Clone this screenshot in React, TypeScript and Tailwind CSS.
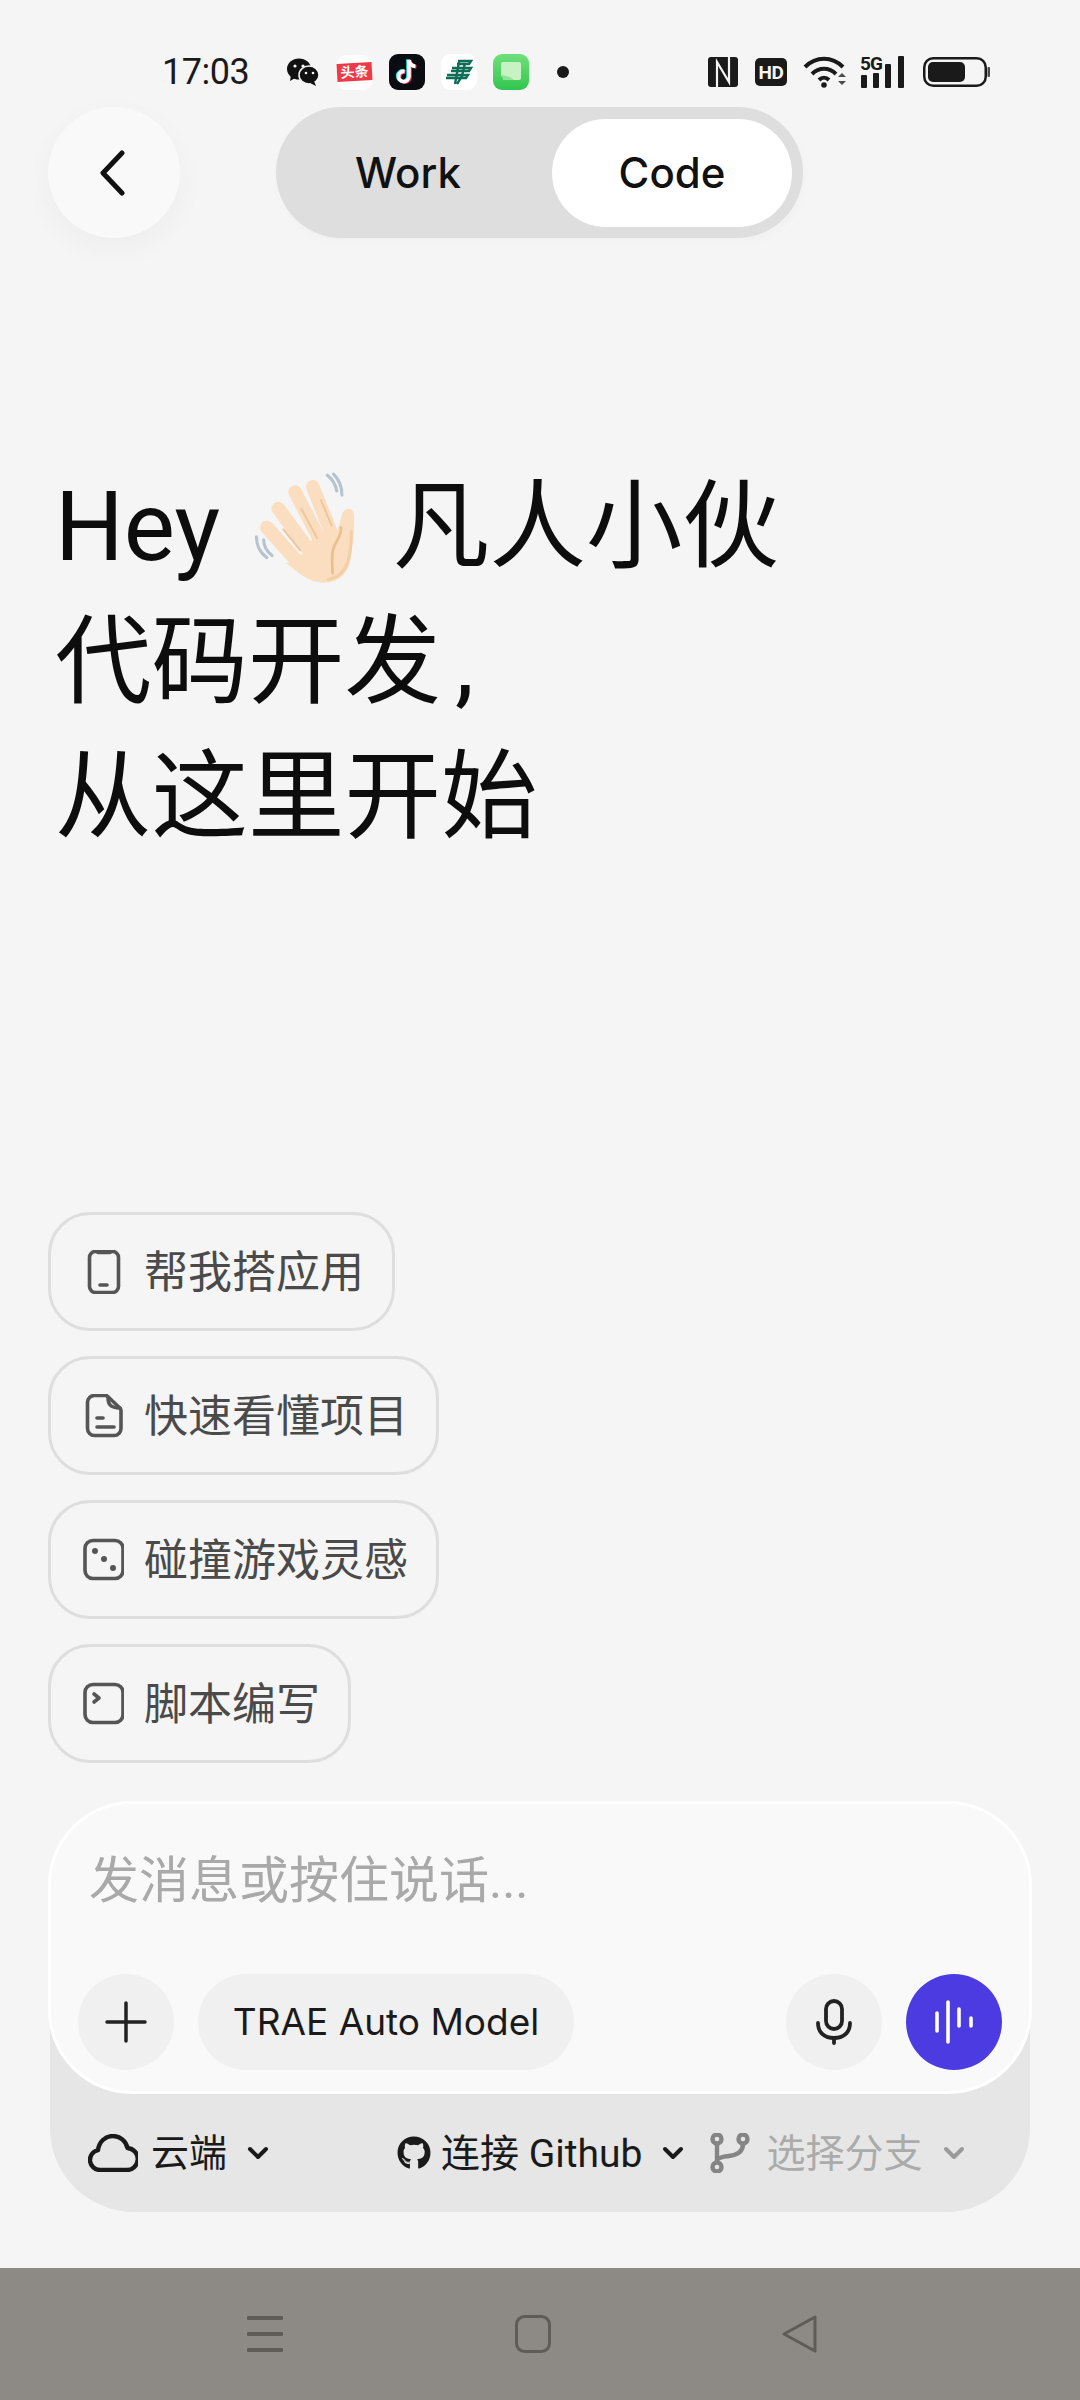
import React from "react";
import { FaGithub } from "react-icons/fa";

function WeChat() {
  return (
    <svg width="32" height="28" viewBox="0 0 32 28" className="shrink-0">
      <ellipse cx="12" cy="11" rx="12" ry="10.5" fill="#111" />
      <path d="M4 17l-1 6 7-4z" fill="#111" />
      <ellipse cx="22" cy="17" rx="10" ry="9" fill="#111" stroke="#f5f5f5" strokeWidth="1.5" />
      <path d="M27 23l2 5-6-3z" fill="#111" />
      <circle cx="8" cy="8" r="1.6" fill="#f5f5f5" />
      <circle cx="16" cy="8" r="1.6" fill="#f5f5f5" />
      <circle cx="19" cy="15" r="1.3" fill="#f5f5f5" />
      <circle cx="26" cy="15" r="1.3" fill="#f5f5f5" />
    </svg>
  );
}

function TikTok() {
  const note = "M20 6v16.5a5.2 5.2 0 1 1-4.4-5.1";
  const tail = "M20 6c.4 3.6 2.8 6 6.4 6.4";
  return (
    <div className="w-[36px] h-[36px] rounded-[9px] bg-[#0b0b12] shrink-0">
      <svg width="36" height="36" viewBox="0 0 36 36" fill="none" strokeWidth="3.6">
        <g stroke="#25e4e0" transform="translate(-1 -0.5)"><path d={note} /><path d={tail} /></g>
        <g stroke="#f5285a" transform="translate(1 0.5)"><path d={note} /><path d={tail} /></g>
        <g stroke="#ffffff"><path d={note} /><path d={tail} /></g>
      </svg>
    </div>
  );
}

function Post() {
  return (
    <div className="w-[36px] h-[36px] rounded-[9px] bg-white shrink-0">
      <svg width="36" height="36" viewBox="0 0 36 36" fill="none" stroke="#0f6d57" strokeWidth="2.4">
        <path d="M17 7h13l-2 3H16M11 14h19l-2 3H10M6 21h21l-2 3H5" />
        <path d="M18 8l-4 22M24 9l-3 13-5 8" />
      </svg>
    </div>
  );
}

function Messages() {
  return (
    <div className="w-[36px] h-[36px] rounded-[9px] bg-gradient-to-b from-[#6fe07a] to-[#2fc54f] shrink-0">
      <svg width="36" height="36" viewBox="0 0 36 36">
        <path d="M10 8h16a2 2 0 0 1 2 2v14a2 2 0 0 1-2 2H15l-5-3a2 2 0 0 1-2-2V10a2 2 0 0 1 2-2z" fill="#c6f2c4" />
        <path d="M9 21l8 2 4 3H10z" fill="#8fe29a" />
      </svg>
    </div>
  );
}

function StatusBar() {
  return (
    <div className="h-[107px] pt-[37px] pl-[162px] flex items-center text-[#1a1a1a]">
      <span className="text-[36px] leading-none w-[125px] shrink-0 tracking-[-0.5px]">17:03</span>
      <WeChat />
      <div className="ml-[18px] w-[35px] h-[35px] rounded-[9px] bg-white flex items-center justify-center shrink-0">
        <div className="w-[35px] h-[18px] bg-[#ee3a47] -rotate-[3deg] flex items-center justify-center text-white text-[14px] font-bold leading-none">头条</div>
      </div>
      <div className="ml-[17px]"><TikTok /></div>
      <div className="ml-[16px]"><Post /></div>
      <div className="ml-[16px]"><Messages /></div>
      <div className="ml-[28px] w-[12px] h-[12px] rounded-full bg-[#1a1a1a] shrink-0" />
      <div className="ml-[139px] w-[30px] h-[30px] rounded-[3px] bg-[#1a1a1a] shrink-0">
        <svg width="30" height="30" viewBox="0 0 30 30" fill="none" stroke="#f5f5f5" strokeWidth="2.2">
          <path d="M9 30V5l12 20V0" />
        </svg>
      </div>
      <div className="ml-[17px] w-[32px] h-[28px] rounded-[5px] bg-[#1a1a1a] text-[#f5f5f5] text-[19px] font-bold leading-none flex items-center justify-center shrink-0 tracking-[-0.5px]">HD</div>
      <svg className="ml-[16px] shrink-0" width="45" height="32" viewBox="0 0 45 32" fill="none" stroke="#1a1a1a" strokeWidth="4">
        <path d="M2 11c11-11 27-11 38 0" />
        <path d="M9 18c7-7 17-7 24 0" />
        <path d="M16 24c3-3 7-3 10 0" />
        <circle cx="21" cy="29" r="2.8" fill="#1a1a1a" stroke="none" />
        <path d="M35 21l4-4 4 4zM35 25l4 4 4-4z" fill="#4b4b4b" stroke="none" />
      </svg>
      <div className="ml-[12px] w-[47px] h-[32px] relative shrink-0">
        <span className="absolute left-0 top-[-2px] text-[19px] font-bold leading-none tracking-[-1px]">5G</span>
        <svg width="47" height="32" viewBox="0 0 47 32" fill="#1a1a1a">
          <rect x="1" y="19" width="6" height="13" rx="1" />
          <rect x="13" y="17" width="6" height="15" rx="1" />
          <rect x="25" y="8" width="6" height="24" rx="1" />
          <rect x="38" y="0" width="6" height="32" rx="1" />
        </svg>
      </div>
      <svg className="ml-[16px] shrink-0" width="68" height="30" viewBox="0 0 68 30">
        <rect x="1.25" y="1.25" width="61.5" height="27.5" rx="9" fill="none" stroke="#1a1a1a" strokeWidth="2.5" />
        <rect x="5" y="5" width="37" height="20" rx="5" fill="#1a1a1a" />
        <rect x="64.5" y="10" width="2.5" height="10" rx="1" fill="#4b4b4b" />
      </svg>
    </div>
  );
}

function Header() {
  return (
    <div className="flex items-center pl-[48px]">
      <div className="w-[132px] h-[131px] rounded-full bg-[#f9f9f9] shadow-[0_10px_30px_rgba(0,0,0,0.035)] flex items-center justify-center">
        <svg width="30" height="46" viewBox="0 0 30 46" fill="none" stroke="#111" strokeWidth="5" strokeLinecap="round" strokeLinejoin="round" className="mr-[4px]">
          <path d="M25 3L6 23l19 20" />
        </svg>
      </div>
      <div className="ml-[96px] w-[527px] h-[131px] rounded-full bg-[#dedede] shadow-[2px_4px_10px_rgba(0,0,0,0.02)] flex items-center pr-[11px] text-[42px] font-medium text-[#111] font-['Inter','Noto_Sans_CJK_SC',sans-serif]">
        <div className="w-[276px] text-center pr-[12px]">Work</div>
        <div className="w-[240px] h-[108px] rounded-full bg-white flex items-center justify-center">Code</div>
      </div>
    </div>
  );
}

function Wave() {
  return (
    <svg width="122" height="122" viewBox="0 0 117 117" fill="none" strokeLinecap="round" className="shrink-0 ml-[2px] mt-[4px]">
      <g stroke="#b7c4d0" strokeWidth="3">
        <path d="M78 6c5 4 8 9 9 15" />
        <path d="M84 5c5 5 8 11 8 20" />
        <path d="M10 65c0 8 3 15 10 20" />
        <path d="M17 68c0 6 3 11 8 15" />
      </g>
      <path d="M48 90L70 58l16 8 6-22c2-7 9-8 11-2 2 8 0 25-3 45-2 12-10 22-26 22-14 0-24-10-36-19z" fill="#fbddbf" />
      <g stroke="#fbddbf" strokeWidth="13">
        <path d="M20 56l34 38" />
        <path d="M31 38l34 46" />
        <path d="M47 22l27 52" />
        <path d="M64 17l22 55" />
      </g>
      <g stroke="#efc79c" strokeWidth="2">
        <path d="M36 58l16 20" />
        <path d="M53 38l15 28" />
        <path d="M72 30l10 24" />
      </g>
      <path d="M91 56c2 8-7 14-8 24-1 8 0 14 0 20" stroke="#ebbe8c" strokeWidth="2.5" />
      <path d="M101 60c0 18-1 42-22 46" stroke="#f3cfa8" strokeWidth="3" />
    </svg>
  );
}

function Heading() {
  return (
    <div className="mt-[222px] pl-[55px] text-[96.500px] leading-[135px] text-[#0d0d0d]">
      <div className="flex items-center whitespace-pre h-[135px]">
        <span>Hey </span>
        <Wave />
        <span className="ml-[1px]"> 凡人小伙</span>
      </div>
      <div>代码开发<span className="ml-[14px]">,</span></div>
      <div>从这里开始</div>
    </div>
  );
}

const iconProps = {
  width: 44,
  height: 44,
  viewBox: "0 0 44 44",
  fill: "none",
  stroke: "#555555",
  strokeWidth: 3.6,
  strokeLinecap: "round" as const,
  strokeLinejoin: "round" as const,
  className: "shrink-0",
};

function PhoneIcon() {
  return (
    <svg {...iconProps}>
      <rect x="9.5" y="1.5" width="29" height="41" rx="6" />
      <path d="M18 2.5h12" />
      <path d="M20 35h7" />
    </svg>
  );
}
function DocIcon() {
  return (
    <svg {...iconProps}>
      <path d="M15 1.5h11c1 0 1.6.4 2.3 1l12 11.500c.8.800 1.200 1.500 1.200 2.500v18a7 7 0 0 1-7 7H15a7 7 0 0 1-7-7v-26a7 7 0 0 1 7-7z" transform="translate(-0.5 0)" />
      <path d="M28 3c0 7 2 11 12 11" />
      <path d="M17 24h6" />
      <path d="M17 33h17" />
    </svg>
  );
}
function DiceIcon() {
  return (
    <svg {...iconProps}>
      <rect x="5.500" y="1.500" width="38" height="38" rx="8" transform="translate(-0.5 1)" />
      <circle cx="15" cy="13" r="3" fill="#555555" stroke="none" />
      <circle cx="24" cy="21" r="3" fill="#555555" stroke="none" />
      <circle cx="33" cy="30" r="3" fill="#555555" stroke="none" />
    </svg>
  );
}
function TermIcon() {
  return (
    <svg {...iconProps}>
      <rect x="5.500" y="1.500" width="38" height="38" rx="8" transform="translate(-0.5 1)" />
      <path d="M14 12l5 4-5 4" />
    </svg>
  );
}

function Chip({ icon, label }: { icon: React.ReactNode; label: string }) {
  return (
    <div className="self-start h-[119px] rounded-[42px] border-[3px] border-[#dedede] pl-[29px] pr-[28px] flex items-center gap-[20px] text-[44px] leading-none text-[#4a4a4a]">
      {icon}
      <span className="pt-[2px]">{label}</span>
    </div>
  );
}

function Chevron({ color }: { color: string }) {
  return (
    <svg width="22" height="14" viewBox="0 0 22 14" fill="none" stroke={color} strokeWidth="4" strokeLinecap="round" strokeLinejoin="round" className="shrink-0">
      <path d="M3 3l8 8 8-8" />
    </svg>
  );
}

function Composer() {
  return (
    <div className="mt-[38px] ml-[48px] w-[984px]">
      <div className="relative z-10 h-[293px] rounded-[84px] border-[3px] border-white bg-[#f9f9f9] flex flex-col justify-between pb-[21px]">
        <div className="pt-[47px] pl-[38px] text-[50px] leading-[60px] text-[#a9a9a9]">发消息或按住说话...</div>
        <div className="flex items-center px-[27px]">
          <div className="w-[96px] h-[96px] rounded-full bg-[#f0f0f0] flex items-center justify-center">
            <svg width="42" height="42" viewBox="0 0 42 42" fill="none" stroke="#222" strokeWidth="3.5" strokeLinecap="round">
              <path d="M21 2v38M2 21h38" />
            </svg>
          </div>
          <div className="ml-[24px] w-[376px] h-[96px] rounded-full bg-[#f0f0f0] flex items-center justify-center text-[37px] text-[#1a1a1a] font-['Inter','Noto_Sans_CJK_SC',sans-serif]">TRAE Auto Model</div>
          <div className="ml-auto w-[96px] h-[96px] rounded-full bg-[#f0f0f0] flex items-center justify-center">
            <svg width="38" height="46" viewBox="0 0 38 46" fill="none" stroke="#222" strokeWidth="3.8" strokeLinecap="round">
              <rect x="11" y="2" width="16" height="28" rx="8" />
              <path d="M3 24c0 10 7 15 16 15s16-5 16-15" />
              <path d="M19 39v5" />
            </svg>
          </div>
          <div className="ml-[24px] w-[96px] h-[96px] rounded-full bg-[#4b3be0] flex items-center justify-center">
            <svg width="42" height="44" viewBox="0 0 42 44" fill="none" stroke="#fff" strokeWidth="3.6" strokeLinecap="round">
              <path d="M4 13v18M15 2v40M26 9v17M38 18v8" />
            </svg>
          </div>
        </div>
      </div>
      <div className="-mt-[80px] mx-[2px] h-[198px] pt-[80px] rounded-b-[84px] bg-[#e6e6e6] flex items-center pl-[38px] text-[38px] text-[#1a1a1a]">
        <svg width="50" height="38" viewBox="0 0 50 38" fill="none" stroke="#1a1a1a" strokeWidth="4.4" strokeLinejoin="round" className="shrink-0">
          <path d="M12 36a10 10 0 0 1-2-19.800C11 8 17 2 25 2c7 0 13 5 14.500 12A11 11 0 0 1 38 36z" />
        </svg>
        <span className="ml-[13px]">云端</span>
        <div className="ml-[20px]"><Chevron color="#1a1a1a" /></div>
        <FaGithub className="ml-[128px] w-[34px] h-[34px] shrink-0 text-[#1a1a1a]" />
        <span className="ml-[10px] pt-[3px] whitespace-nowrap text-[39px]">连接 Github</span>
        <div className="ml-[20px]"><Chevron color="#1a1a1a" /></div>
        <svg width="40" height="40" viewBox="0 0 40 40" fill="none" stroke="#858585" strokeWidth="4.4" className="ml-[26px] shrink-0">
          <circle cx="7" cy="6" r="4.5" />
          <circle cx="7" cy="34" r="4.5" />
          <circle cx="33" cy="6" r="4.5" />
          <path d="M7 11v18M33 11c0 8-6 11-14 12-7 .8-12 2-12 5" />
        </svg>
        <span className="ml-[16px] pt-[3px] text-[39px] text-[#ababab] whitespace-nowrap">选择分支</span>
        <div className="ml-[21px]"><Chevron color="#9a9a9a" /></div>
      </div>
    </div>
  );
}

function NavBar() {
  return (
    <div className="mt-auto h-[132px] bg-[#8d8985] flex items-center pl-[247px] pb-[1px]">
      <svg width="36" height="38" viewBox="0 0 36 38" fill="#5f5b57">
        <rect x="0" y="1" width="36" height="4" rx="1" />
        <rect x="0" y="17" width="36" height="4" rx="1" />
        <rect x="0" y="33" width="36" height="4" rx="1" />
      </svg>
      <svg className="ml-[232px]" width="36" height="38" viewBox="0 0 36 38" fill="none" stroke="#5f5b57" strokeWidth="3">
        <rect x="1.500" y="1.500" width="33" height="35" rx="8" />
      </svg>
      <svg className="ml-[231px]" width="36" height="38" viewBox="0 0 36 38" fill="none" stroke="#5f5b57" strokeWidth="3" strokeLinejoin="round">
        <path d="M33 2L2 19l31 17z" />
      </svg>
    </div>
  );
}

export default function App() {
  return (
    <div className="w-[1080px] h-[2400px] bg-[#f5f5f5] flex flex-col overflow-hidden font-['Roboto','Noto_Sans_CJK_SC',sans-serif]">
      <StatusBar />
      <Header />
      <Heading />
      <div className="mt-[347px] pl-[48px] flex flex-col gap-[25px]">
        <Chip icon={<PhoneIcon />} label="帮我搭应用" />
        <Chip icon={<DocIcon />} label="快速看懂项目" />
        <Chip icon={<DiceIcon />} label="碰撞游戏灵感" />
        <Chip icon={<TermIcon />} label="脚本编写" />
      </div>
      <Composer />
      <NavBar />
    </div>
  );
}
